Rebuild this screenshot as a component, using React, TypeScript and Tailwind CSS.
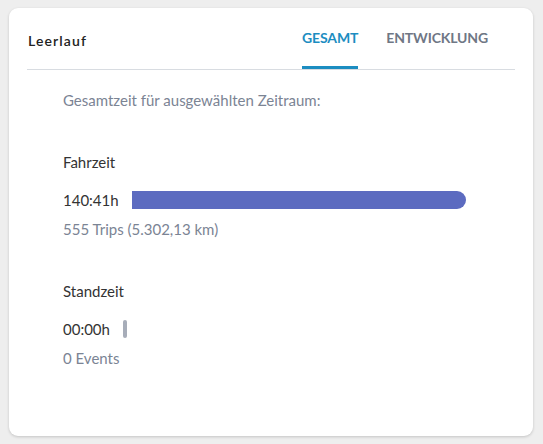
export default function App() {
  const rows = [
    { label: 'Fahrzeit', value: '140:41h', width: 334, color: 'bg-[#5c6bc0]', sub: '555 Trips (5.302,13 km)' },
    { label: 'Standzeit', value: '00:00h', width: 4, color: 'bg-[#a7adb9]', sub: '0 Events' },
  ]

  return (
    <div className="h-[444px] w-[543px] bg-[#eeeeee] pt-2 pl-[9px] pr-[10px] pb-2 font-['Lato',sans-serif]">
      <div className="h-full rounded-[9px] bg-white shadow-[0_1px_3px_rgba(0,0,0,0.18)] px-[18px]">
        {/* Header with tabs */}
        <div className="flex h-[62px] items-stretch justify-between border-b border-[#d8dce1]">
          <div className="flex items-center pt-[3px] pl-[1px] text-[14px] font-semibold tracking-[0.08em] text-[#222]">
            Leerlauf
          </div>
          <div className="mr-[27px] flex gap-[28px]">
            <div className="flex flex-col justify-end">
              <span className="flex flex-1 items-center pt-[1px] text-[14px] font-bold tracking-[-0.01em] text-[#1c8dc1]">GESAMT</span>
              <span className="h-[3px] bg-[#1c8dc1]" />
            </div>
            <div className="flex flex-col justify-end">
              <span className="flex flex-1 items-center pt-[1px] text-[14px] font-bold tracking-[-0.01em] text-[#6f7785]">ENTWICKLUNG</span>
              <span className="h-[3px]" />
            </div>
          </div>
        </div>

        {/* Body */}
        <div className="pl-[36px] pt-[20px] text-[15px] leading-[20px]">
          <div className="text-[#7b8494]">Gesamtzeit für ausgewählten Zeitraum:</div>
          {rows.map((r) => (
            <div key={r.label} className="mt-[42px]">
              <div className="text-[#333]">{r.label}</div>
              <div className="mt-[18px] flex h-[20px] items-center gap-[13px]">
                <span className="text-[#333]">{r.value}</span>
                <span
                  className={`h-[18px] ${r.color} ${r.width > 10 ? 'rounded-r-full' : 'rounded-[2px]'}`}
                  style={{ width: r.width }}
                />
              </div>
              <div className="mt-[9px] text-[#7b8494]">{r.sub}</div>
            </div>
          ))}
        </div>
      </div>
    </div>
  )
}
